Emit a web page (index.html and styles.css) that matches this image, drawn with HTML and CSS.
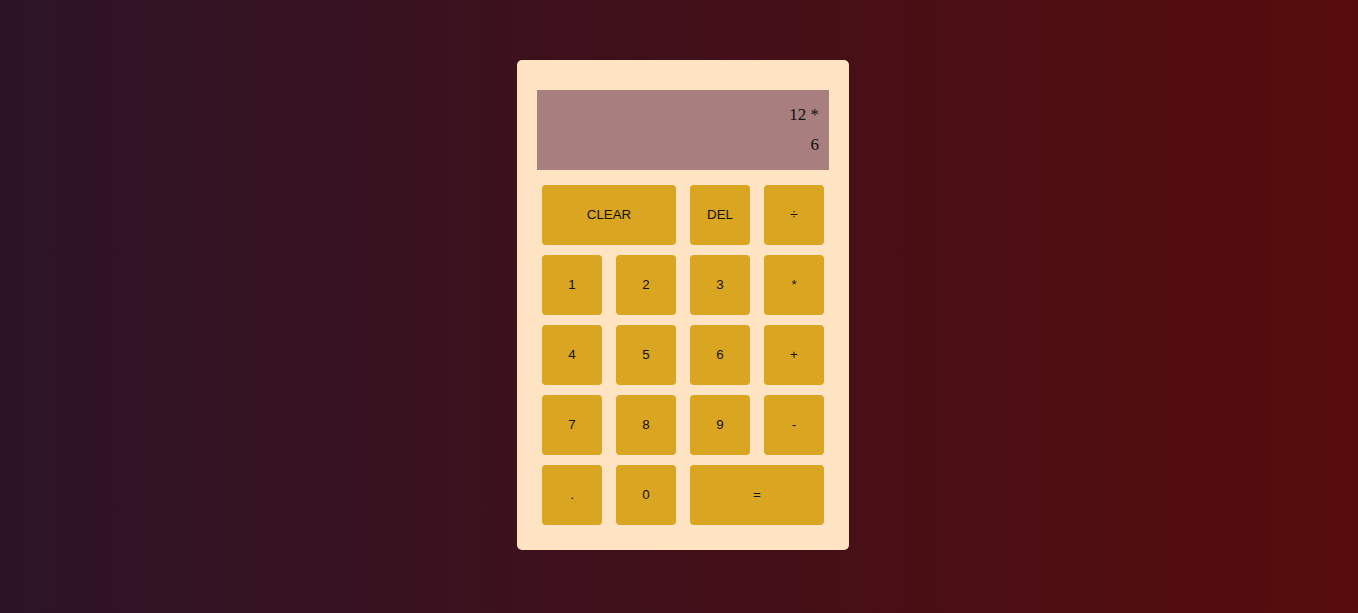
FILE: index.html
```html
<!DOCTYPE html>
<html>
<head>
<meta charset="utf-8">
<link rel="stylesheet" href="styles.css">
</head>
<body>
<div class="page">
  <div class="calc">
    <div class="display">
      <div class="prev">12 *</div>
      <div class="curr">6</div>
    </div>
    <div class="keys">
      <button class="key span2">CLEAR</button>
      <button class="key">DEL</button>
      <button class="key">÷</button>
      <button class="key">1</button>
      <button class="key">2</button>
      <button class="key">3</button>
      <button class="key">*</button>
      <button class="key">4</button>
      <button class="key">5</button>
      <button class="key">6</button>
      <button class="key">+</button>
      <button class="key">7</button>
      <button class="key">8</button>
      <button class="key">9</button>
      <button class="key">-</button>
      <button class="key">.</button>
      <button class="key">0</button>
      <button class="key span2">=</button>
    </div>
  </div>
</div>
</body>
</html>
```
FILE: styles.css
```css
html, body {
  margin: 0;
  padding: 0;
  height: 100%;
}
body {
  background: linear-gradient(to right, #2c1427, #570c0c);
}
.page {
  display: flex;
  justify-content: center;
  align-items: flex-start;
  padding-top: 60px;
  padding-left: 8px;
  box-sizing: border-box;
  height: 100%;
}
.calc {
  width: 332px;
  box-sizing: border-box;
  background: #ffe4c4;
  border-radius: 5px;
  padding: 30px 20px 25px;
}
.display {
  height: 80px;
  box-sizing: border-box;
  background: #a87e7e;
  padding: 10px 10px 0;
  text-align: right;
  font-family: "Liberation Serif", serif;
  font-size: 17px;
  line-height: 30px;
  color: #111;
}
.keys {
  display: grid;
  grid-template-columns: repeat(4, 60px);
  grid-auto-rows: 60px;
  column-gap: 14px;
  row-gap: 10px;
  justify-content: center;
  margin-top: 15px;
}
.key {
  border: none;
  border-radius: 4px;
  background: #daa520;
  font-family: "Liberation Sans", Arial, sans-serif;
  font-size: 13.333px;
  color: #111;
  padding: 0 0 2px;
}
.span2 {
  grid-column: span 2;
}
```
